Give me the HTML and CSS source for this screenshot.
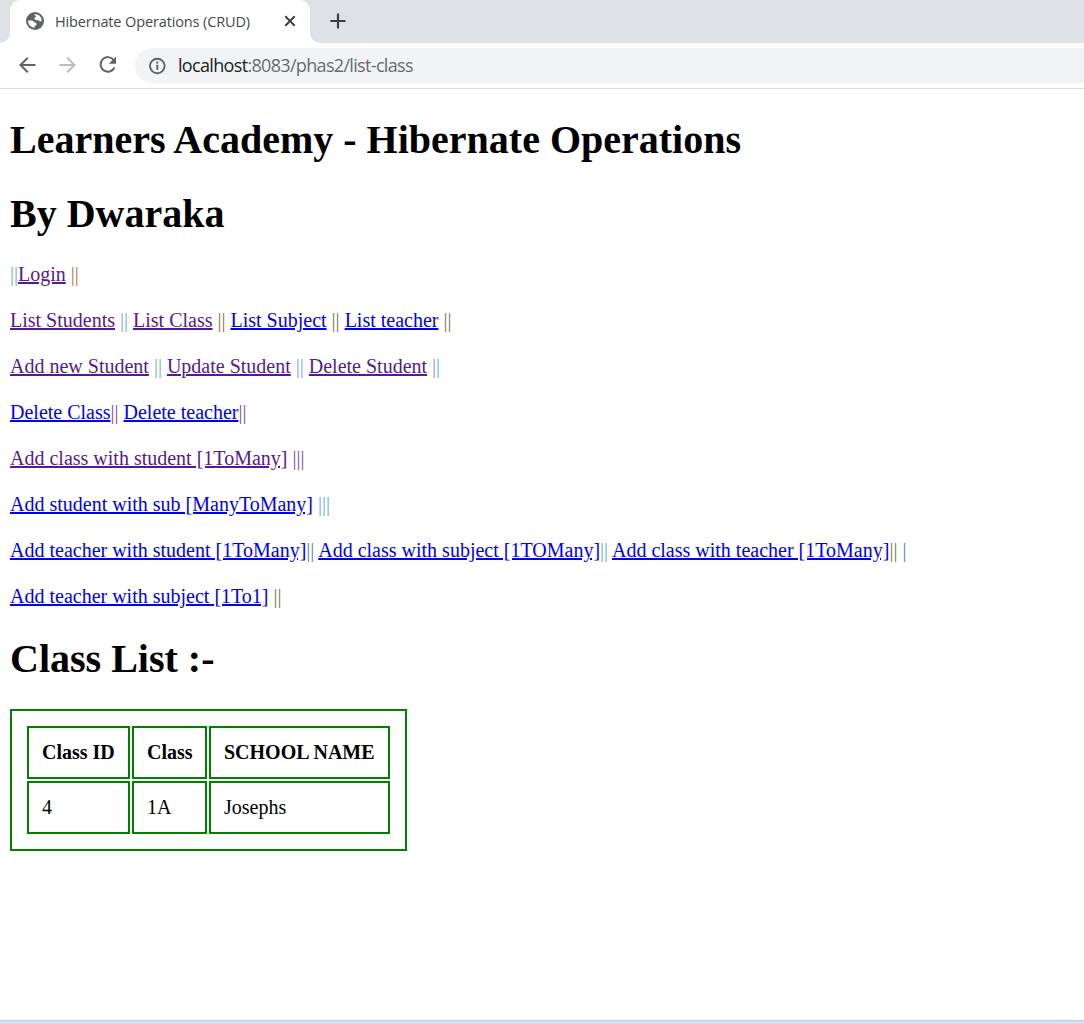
FILE: index.html
```html
<!DOCTYPE html>
<html lang="en">
<head>
<meta charset="utf-8">
<title>Hibernate Operations (CRUD)</title>
<link rel="stylesheet" href="styles.css">
</head>
<body>
<header class="browser">
  <div class="tabstrip">
    <div class="edge"></div>
    <div class="tab">
      <svg class="favicon" width="18" height="18" viewBox="0 0 18 18"><circle cx="9" cy="9" r="9" fill="#5f6368"/><path d="M8.2 2.3c3.6-.5 6.6 1.6 7.4 4.9.2 1-.1 2.3-1.1 2.4-1.300.1-1.300-1.300-2.600-1.300-1.500 0-2.700-.1-3.300-1.200-.5-1 .1-1.700 1-2.100.5-.3.600-.7 0-1.100-.6-.4-1.300-.7-1.400-1.600zM2.200 8.600h3.600c1.500 0 1.700 1.600 3.100 1.800 1.300.2 2 1 1.700 2-.3 1.100-1.700.8-1.900 1.800-.1.700.1 1.200-.3 1.600C4.700 15.400 2 12.500 2.200 8.600z" fill="#fff"/></svg>
      <span class="tab-title">Hibernate Operations (CRUD)</span>
      <svg class="close" width="12" height="12" viewBox="0 0 12 12"><path d="M1.3 1.300l9.400 9.400M10.700 1.300l-9.400 9.400" stroke="#3c4043" stroke-width="2"/></svg>
    </div>
    <div class="rest"><svg width="16" height="16" viewBox="0 0 16 16"><path d="M8 .5v15M.5 8h15" stroke="#3c4043" stroke-width="2.2"/></svg></div>
  </div>
  <div class="toolbar">
    <svg class="nav" width="20" height="20" viewBox="0 0 20 20" fill="none" stroke="#5f6368" stroke-width="2"><path d="M18.500 10H3.500M10.800 2.700L3.500 10l7.300 7.300"/></svg>
    <svg class="nav" width="20" height="20" viewBox="0 0 20 20" fill="none" stroke="#babcbe" stroke-width="2"><path d="M2.500 10h15M10.200 2.700l7.300 7.300-7.300 7.300"/></svg>
    <svg class="nav" width="20" height="20" viewBox="0 0 20 20"><path d="M16.700 5A7.300 7.300 0 1 0 17.500 12.500" fill="none" stroke="#5f6368" stroke-width="2"/><path d="M19 1.500v7.200h-7.200z" fill="#5f6368"/></svg>
    <div class="address">
      <svg width="18" height="18" viewBox="0 0 18 18"><circle cx="9.300" cy="9" r="7.300" fill="none" stroke="#5f6368" stroke-width="1.900"/><path d="M9.300 7.800v5M9.300 4.600v2" stroke="#5f6368" stroke-width="2"/></svg>
      <span class="url"><b>localhost</b>:8083/phas2/list-class</span>
    </div>
  </div>
</header>
<main class="page">
  <h1>Learners Academy - Hibernate Operations</h1>
  <h1 class="author">By Dwaraka</h1>
  <nav class="links">
    <div><span class="bars sky">||</span><a class="seen" href="#">Login</a> <span class="bars rust">||</span></div>
    <div><a class="seen" href="#">List Students</a> <span class="bars sky">||</span> <a class="seen" href="#">List Class</a> <span class="bars olive">||</span> <a href="#">List Subject</a> <span class="bars olive">||</span> <a href="#">List teacher</a> <span class="bars olive">||</span></div>
    <div><a class="seen" href="#">Add new Student</a> <span class="bars sky">||</span> <a class="seen" href="#">Update Student</a> <span class="bars sky">||</span> <a class="seen" href="#">Delete Student</a> <span class="bars sky">||</span></div>
    <div><a href="#">Delete Class</a><span class="bars plum">||</span> <a href="#">Delete teacher</a><span class="bars plum">||</span></div>
    <div><a class="seen" href="#">Add class with student [1ToMany]</a> <span class="bars plum">|||</span></div>
    <div><a href="#">Add student with sub [ManyToMany]</a> <span class="bars sky">|||</span></div>
    <div><a href="#">Add teacher with student [1ToMany]</a><span class="bars steel">||</span> <a href="#">Add class with subject [1TOMany]</a><span class="bars sky">||</span> <a href="#">Add class with teacher [1ToMany]</a><span class="bars olive">||</span> <span class="bars steel">|</span></div>
    <div><a href="#">Add teacher with subject [1To1]</a> <span class="bars olive">||</span></div>
  </nav>
  <h1>Class List :-</h1>
  <table>
    <colgroup><col class="c1"><col class="c2"><col class="c3"></colgroup>
    <tr><th>Class ID</th><th>Class</th><th>SCHOOL NAME</th></tr>
    <tr><td>4</td><td>1A</td><td>Josephs</td></tr>
  </table>
</main>
<footer class="taskbar"></footer>
</body>
</html>
```
FILE: styles.css
```css
* { box-sizing: border-box; }
body {
  margin: 0;
  height: 1024px;
  display: flex;
  flex-direction: column;
  overflow: hidden;
  background: #fff;
  color: #000;
  font: 20px/23px "Liberation Serif", "Times New Roman", serif;
}
.browser { height: 89px; flex: none; border-bottom: 1px solid #d9dadc; font-family: "Open Sans", sans-serif; }
.tabstrip { height: 43px; display: flex; background: #fff; }
.edge { width: 10px; background: #dee1e6; border-bottom-right-radius: 10px; }
.tab {
  width: 300px;
  display: flex;
  align-items: center;
  padding: 0 14px 1px 16px;
  background: linear-gradient(#dee1e6, #dee1e6) 0 0 / 100% 12px no-repeat;
  position: relative;
  isolation: isolate;
}
.tab::before { content: ""; position: absolute; inset: 0; z-index: -1; background: #fff; border-radius: 10px 10px 0 0; }
.tab-title { margin-left: 11px; flex: 1; white-space: nowrap; font-size: 14.5px; letter-spacing: -0.13px; color: #45484c; }
.rest { flex: 1; display: flex; align-items: center; padding: 0 0 1px 19.5px; background: #dee1e6; border-bottom-left-radius: 10px; }
.toolbar { height: 45px; display: flex; align-items: center; padding: 0 0 1px 17px; }
.nav { margin-right: 20px; flex: none; }
.address {
  flex: 1;
  height: 35px;
  margin: 1px 0 0 -2px;
  display: flex;
  align-items: center;
  padding-left: 13px;
  background: #f1f3f4;
  border-radius: 18px 0 0 18px;
}
.url { margin-left: 12px; font-size: 18px; letter-spacing: -0.67px; color: #686c70; white-space: nowrap; }
.url b { font-weight: 400; color: #202124; }
.page { flex: 1; padding: 0 10px; }
h1 { margin: 27px 0; font-size: 40px; line-height: 47px; font-weight: 700; }
.author { margin-bottom: 26px; }
.links { display: flex; flex-direction: column; gap: 23px; white-space: nowrap; }
.links a { color: #00e; text-decoration: underline; text-decoration-thickness: 2px; }
.links a.seen { color: #551a8b; }
.sky { color: #72acd8; }
.rust { color: #b87048; }
.olive { color: #777a50; }
.plum { color: #805095; }
.steel { color: #5580a8; }
table { table-layout: fixed; width: 397px; height: 142px; padding: 13px; border: 2px solid green; border-spacing: 2px; }
.c1 { width: 103px; }
.c2 { width: 75px; }
.c3 { width: 181px; }
th, td { height: 53px; padding: 13px; border: 2px solid green; text-align: left; white-space: nowrap; }
.taskbar { height: 4px; flex: none; background: #d3def5; border-top: 1px solid #c0cbe2; }
```
